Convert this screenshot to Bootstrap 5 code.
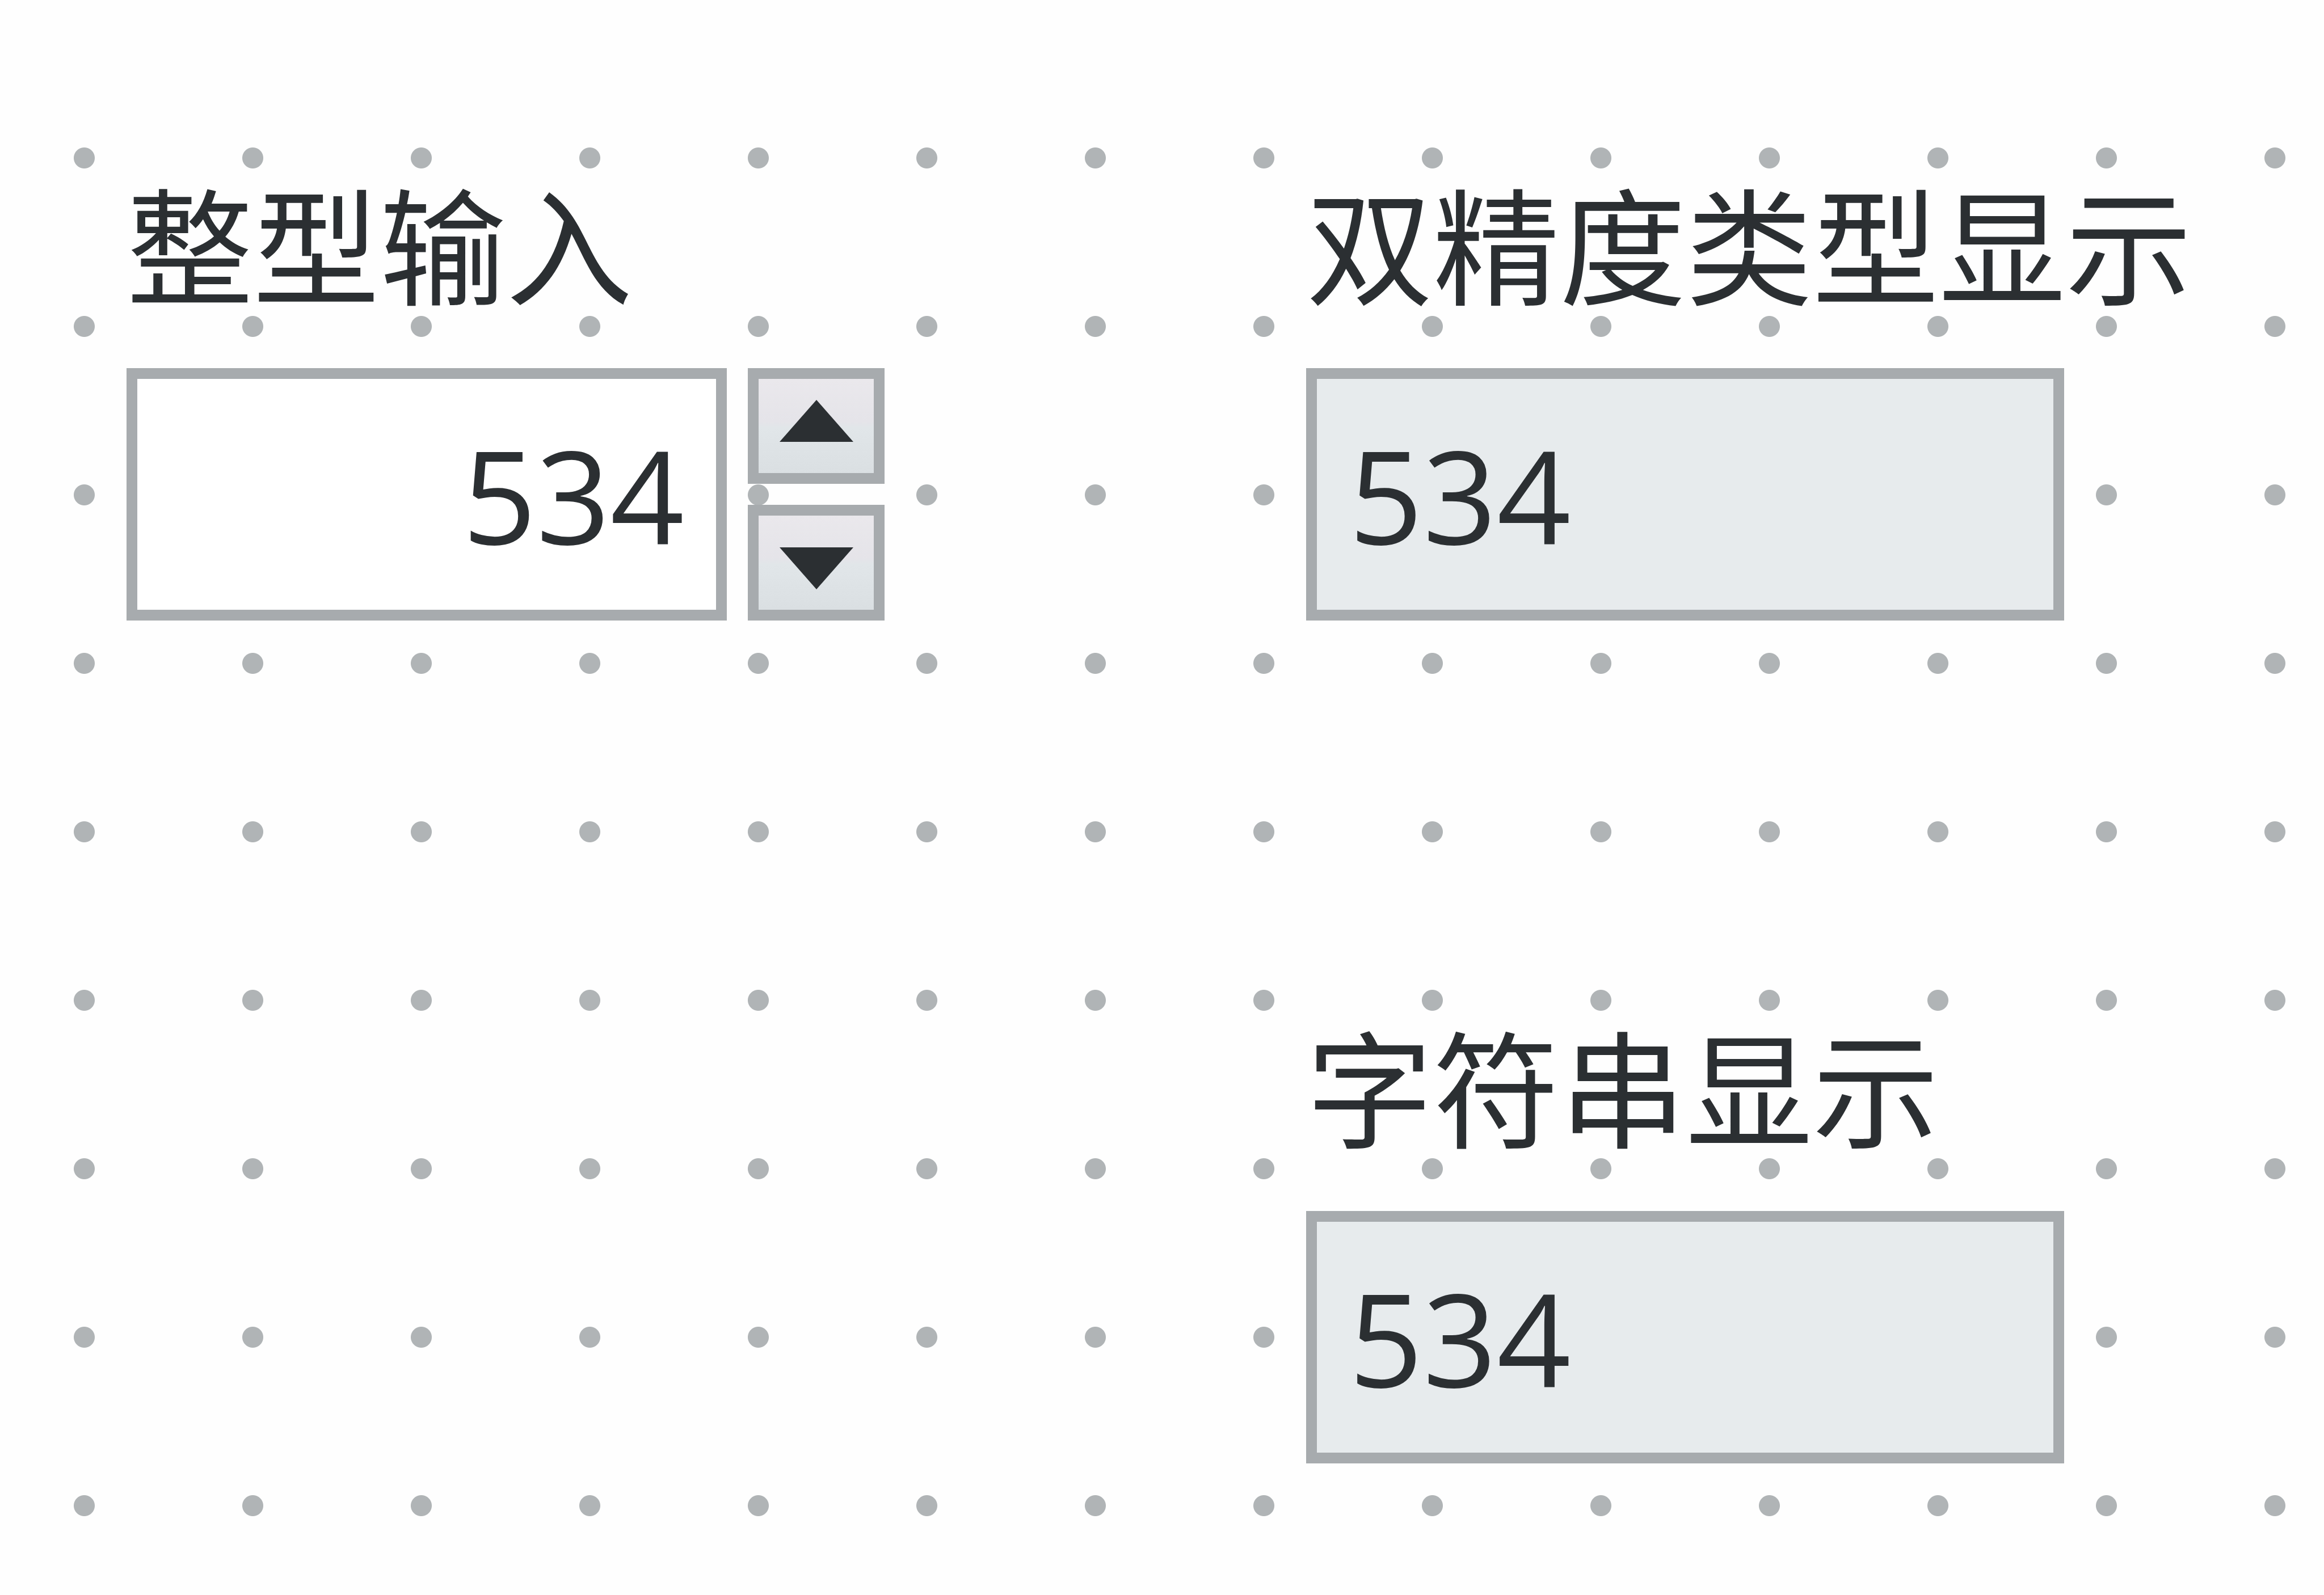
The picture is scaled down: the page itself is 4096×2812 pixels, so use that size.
<!DOCTYPE html>
<html lang="zh-CN">
<head>
<meta charset="utf-8">
<meta name="viewport" content="width=device-width, initial-scale=1">
<title>前面板</title>
<link rel="stylesheet" href="https://cdn.jsdelivr.net/npm/bootstrap@5.3.0/dist/css/bootstrap.min.css">
<style>
  body {
    font-family: "Noto Sans CJK SC", sans-serif;
    color: #2b2f32;
    background-color: #fefefe;
  }
  /* alignment grid of the panel */
  .panel-canvas {
    display: grid;
    grid-template-columns: 2080fr 1794fr;
    align-items: start;
    padding: 299px 0 0 223px;
    background-image: radial-gradient(circle, #b0b4b6 18px, transparent 19px);
    background-size: 297px 297px;
    background-position: 0 130px;
  }
  .panel-column { row-gap: 691px; }
  .control-label {
    font-size: 223px;
    line-height: 250px;
    margin-bottom: 100px;
  }
  .control-row { height: 445px; gap: 37px; }
  .control-field {
    height: 445px;
    border: 19px solid #a7abae;
    border-radius: 0;
    padding: 0 56px;
    font-family: "Open Sans", "Noto Sans CJK SC", sans-serif;
    font-size: 228px;
    line-height: 400px;
    color: #2b2f32;
    background-color: #fff;
  }
  .field-entry { max-width: 1058px; }
  .field-readout { max-width: 1336px; }
  .field-readout, .field-readout:focus { background-color: #e7ebed; }
  .step-stack { width: 241px; gap: 37px; }
  .step-btn {
    border: 19px solid #a7abae;
    background: linear-gradient(#eae8ec, #e5e4e9 45%, #e1e6e9 52%, #dadfe2);
  }
  .step-up { padding: 0 0 19px; }
  .step-down { padding: 19px 0 0; }
</style>
<script src="https://cdn.jsdelivr.net/npm/bootstrap@5.3.0/dist/js/bootstrap.bundle.min.js"></script>
</head>
<body>
<main class="panel-canvas min-vh-100">
  <section class="panel-column d-flex flex-column">
    <div>
      <label class="control-label d-block text-nowrap" for="intInput">整型输入</label>
      <div class="control-row d-flex">
        <input class="control-field field-entry form-control text-end" id="intInput" type="text" inputmode="numeric" value="534">
        <div class="step-stack d-flex flex-column flex-shrink-0">
          <button class="step-btn step-up flex-fill d-flex align-items-center justify-content-center" type="button" aria-label="增加">
            <svg width="130" height="74" viewBox="0 0 130 74" aria-hidden="true"><path fill="#2b2f32" d="M65 0 130 74H0z"/></svg>
          </button>
          <button class="step-btn step-down flex-fill d-flex align-items-center justify-content-center" type="button" aria-label="减少">
            <svg width="130" height="74" viewBox="0 0 130 74" aria-hidden="true"><path fill="#2b2f32" d="M0 0h130L65 74z"/></svg>
          </button>
        </div>
      </div>
    </div>
  </section>
  <section class="panel-column d-flex flex-column">
    <div>
      <label class="control-label d-block text-nowrap" for="doubleOut">双精度类型显示</label>
      <input class="control-field field-readout form-control" id="doubleOut" type="text" value="534" readonly>
    </div>
    <div>
      <label class="control-label d-block text-nowrap" for="stringOut">字符串显示</label>
      <input class="control-field field-readout form-control" id="stringOut" type="text" value="534" readonly>
    </div>
  </section>
</main>
</body>
</html>
